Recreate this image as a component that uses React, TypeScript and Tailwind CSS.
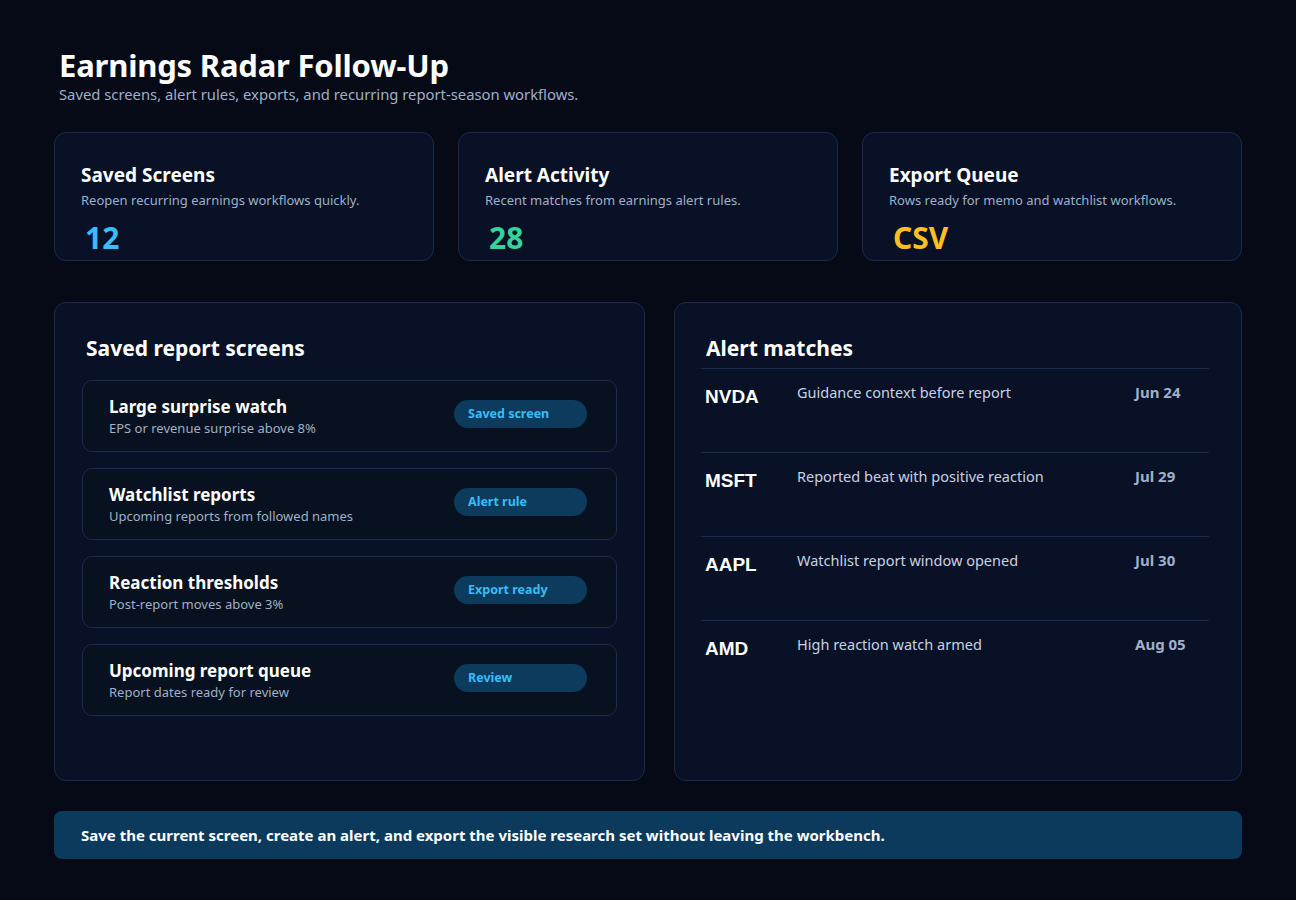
const stats = [
  { title: "Saved Screens", desc: "Reopen recurring earnings workflows quickly.", value: "12", color: "text-[#38bdf8]" },
  { title: "Alert Activity", desc: "Recent matches from earnings alert rules.", value: "28", color: "text-[#34d399]" },
  { title: "Export Queue", desc: "Rows ready for memo and watchlist workflows.", value: "CSV", color: "text-[#fbbf24]" },
];

const screens = [
  { title: "Large surprise watch", desc: "EPS or revenue surprise above 8%", tag: "Saved screen" },
  { title: "Watchlist reports", desc: "Upcoming reports from followed names", tag: "Alert rule" },
  { title: "Reaction thresholds", desc: "Post-report moves above 3%", tag: "Export ready" },
  { title: "Upcoming report queue", desc: "Report dates ready for review", tag: "Review" },
];

const matches = [
  { ticker: "NVDA", note: "Guidance context before report", date: "Jun 24" },
  { ticker: "MSFT", note: "Reported beat with positive reaction", date: "Jul 29" },
  { ticker: "AAPL", note: "Watchlist report window opened", date: "Jul 30" },
  { ticker: "AMD", note: "High reaction watch armed", date: "Aug 05" },
];

export default function App() {
  return (
    <div className="min-h-[900px] w-full bg-[#050a16] px-[54px] pt-[47px] font-['Noto_Sans',sans-serif] text-white">
      {/* Header */}
      <div className="pl-[5px]">
        <h1 className="text-[31px] font-bold leading-[36px] tracking-[-0.2px]">Earnings Radar Follow-Up</h1>
        <p className="mt-[2px] text-[14.8px] leading-[19px] text-[#9fb0c8]">
          Saved screens, alert rules, exports, and recurring report-season workflows.
        </p>
      </div>

      {/* Stat cards */}
      <div className="mt-[28px] grid grid-cols-3 gap-[24px]">
        {stats.map((s) => (
          <div
            key={s.title}
            className="h-[129px] rounded-[12px] border border-[#1c2b47] bg-[#081126] px-[26px] pt-[29px]"
          >
            <h2 className="text-[19px] font-bold leading-[26px]">{s.title}</h2>
            <p className="mt-[4px] text-[13px] leading-[16px] text-[#9fb0c8]">{s.desc}</p>
            <div className={`ml-[4px] mt-[12px] text-[30px] font-bold leading-[36px] ${s.color}`}>{s.value}</div>
          </div>
        ))}
      </div>

      {/* Panels */}
      <div className="mt-[41px] flex gap-[29px]">
        <div className="h-[479px] w-[591px] rounded-[12px] border border-[#1c2b47] bg-[#081126] px-[27px] pt-[31px]">
          <h2 className="pl-[4px] text-[21px] font-bold leading-[28px]">Saved report screens</h2>
          <div className="mt-[18px] flex flex-col gap-[16px]">
            {screens.map((s) => (
              <div
                key={s.title}
                className="flex h-[72px] items-center justify-between rounded-[10px] border border-[#1c2b47] bg-[#08111f] pl-[26px] pr-[29px]"
              >
                <div>
                  <div className="text-[17px] font-bold leading-[22px]">{s.title}</div>
                  <div className="mt-[2px] text-[13px] leading-[17px] text-[#9fb0c8]">{s.desc}</div>
                </div>
                <span className="-mt-[4px] flex h-[28px] w-[133px] items-center rounded-full bg-[#0c3b5d] pl-[14px] text-[12.5px] font-bold text-[#38bdf8]">
                  {s.tag}
                </span>
              </div>
            ))}
          </div>
        </div>

        <div className="h-[479px] flex-1 rounded-[12px] border border-[#1c2b47] bg-[#081126] px-[26px] pt-[31px]">
          <h2 className="pl-[5px] text-[21px] font-bold leading-[28px]">Alert matches</h2>
          <div className="mt-[6px] pr-[6px]">
            {matches.map((m) => (
              <div key={m.ticker} className="flex h-[84px] items-start border-t border-[#1c2b47] pt-[13px]">
                <div className="mt-[3px] w-[96px] pl-[4px] font-['Liberation_Sans',sans-serif] text-[19px] font-bold leading-[24px]">
                  {m.ticker}
                </div>
                <div className="flex-1 text-[14.5px] leading-[20px] text-[#c6d2e3]">{m.note}</div>
                <div className="w-[74px] text-[15px] font-bold leading-[20px] text-[#9fb0c8]">{m.date}</div>
              </div>
            ))}
          </div>
        </div>
      </div>

      {/* Footer banner */}
      <div className="mt-[30px] flex h-[48px] items-center rounded-[8px] bg-[#0b3a5c] px-[27px] text-[15px] font-bold">
        Save the current screen, create an alert, and export the visible research set without leaving the workbench.
      </div>
    </div>
  );
}
